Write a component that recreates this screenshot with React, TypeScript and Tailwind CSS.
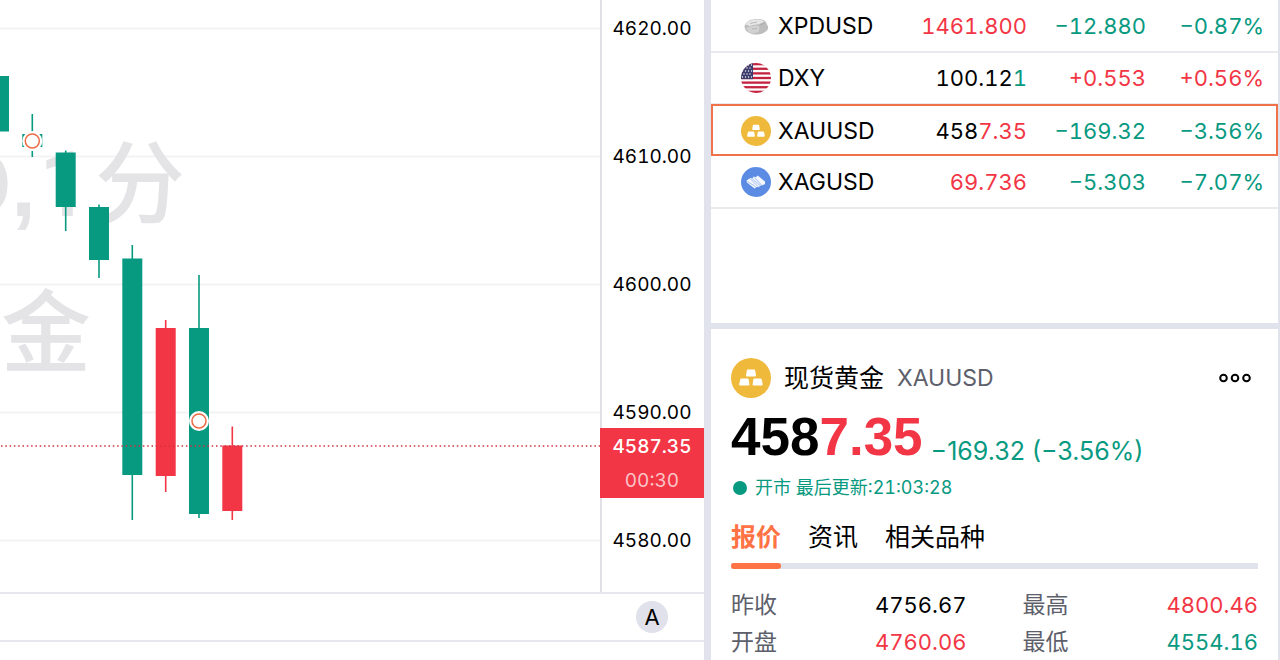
import React from "react";

const GREEN = "#089981";
const RED = "#f23645";

type Candle = { x: number; top: number; bottom: number; high: number; low: number; up: boolean };

const candles: Candle[] = [
  { x: -1, top: 76, bottom: 131.5, high: 76, low: 131.5, up: false },
  { x: 32.3, top: 134, bottom: 147, high: 114, low: 157, up: false },
  { x: 65.7, top: 152.5, bottom: 207, high: 150.5, low: 231, up: false },
  { x: 99, top: 207, bottom: 260, high: 204.5, low: 278, up: false },
  { x: 132.3, top: 258.5, bottom: 475, high: 245, low: 520, up: false },
  { x: 165.7, top: 328, bottom: 476, high: 320, low: 492, up: true },
  { x: 199, top: 328, bottom: 514, high: 275, low: 518, up: false },
  { x: 232.3, top: 445.5, bottom: 511, high: 426.5, low: 520, up: true },
];

const levels = ["4620.00", "4610.00", "4600.00", "4590.00", "4580.00"];

function Chart() {
  return (
    <svg className="absolute inset-0 h-full w-full" role="img" aria-label="XAUUSD 1分">
      {levels.map((level, i) => (
        <line key={level} x1="0" x2="100%" y1={28.5 + i * 128} y2={28.5 + i * 128} stroke="#f3f3f6" strokeWidth="2" />
      ))}
      <g fill="#e4e4e7" fontFamily='Roboto, "Noto Sans CJK SC", sans-serif' fontSize="90" fontWeight="500">
        <text x="12" y="216" textAnchor="end">D</text>
        <text x="11" y="216" fontFamily="Liberation Sans" fontWeight="700">,</text>
        <text x="39" y="216">1</text>
        <text x="95" y="216">分</text>
        <text x="1" y="365">金</text>
      </g>
      {candles.map((c) => (
        <g key={c.x} fill={c.up ? RED : GREEN}>
          <rect x={c.x - 0.8} y={c.high} width="1.6" height={c.low - c.high} />
          <rect x={c.x - 10} y={c.top} width="20" height={c.bottom - c.top} />
        </g>
      ))}
      <line x1="1" x2="100%" y1="446" y2="446" stroke="#d0303f" strokeWidth="1.5" strokeDasharray="1.5 2.8" />
      {[{ x: 32.3, y: 141 }, { x: 199, y: 421 }].map((m) => (
        <g key={m.x} fill="#fff">
          <circle cx={m.x} cy={m.y} r="10" />
          <circle cx={m.x} cy={m.y} r="7" stroke="#ee6a45" strokeWidth="1.5" />
        </g>
      ))}
    </svg>
  );
}

function GoldIcon({ className }: { className: string }) {
  return (
    <svg viewBox="0 0 40 40" className={className} aria-hidden="true">
      <circle cx="20" cy="20" r="20" fill="#efb93c" />
      <g fill="#fff">
        <path d="M17 11.500h6q1 0 1.200 1l.8 4.800q.1 1.200-1 1.200h-8q-1.200 0-1-1.200l.8-4.800q.2-1 1.200-1z" />
        <path d="M10.500 20.500h6q1 0 1.200 1l.7 4.800q.1 1.200-1 1.200H9.200q-1.200 0-1-1.200l1-4.800q.2-1 1.300-1z" />
        <path d="M23.500 20.500h6q1 0 1.200 1l1 4.800q.1 1.200-1 1.200h-8.100q-1.200 0-1-1.200l.7-4.800q.2-1 1.200-1z" />
      </g>
    </svg>
  );
}

function SilverIcon({ className }: { className: string }) {
  return (
    <svg viewBox="0 0 30 30" className={className} aria-hidden="true">
      <circle cx="15" cy="15" r="15" fill="#5b8be3" />
      <path d="M5.500 13.500L9.500 11l1.500.5 2-2 1.800.7 2-1.700L24 14.500v2.500l-3 1.500-1-.3-2.500 2-1.500-.4-2.500 1.700L6 15.500z" fill="#f4f7fe" />
      <path d="M9.500 12l7.500 7.500M13.500 10.500l7 7.500M6.500 14.500l8 5M11 11.500l8 7" stroke="#83a6ee" strokeWidth=".7" fill="none" />
    </svg>
  );
}

function PalladiumIcon({ className }: { className: string }) {
  return (
    <svg viewBox="0 0 30 30" className={className} aria-hidden="true">
      <path d="M3.500 15q.5-3 4-5 2-1.700 6-1.700 5-.8 9 .7 2.500 1 3 3.500l1.500 3q.5 2-1 4-3 3-7.500 3.800-6 1-10-1.300-5-2-5-7z" fill="#bdbdbd" />
      <path d="M4.500 13.500q1.500-3 5-4 6-1.500 11-.5l3 1.500-5 2.500-6 1-4 1z" fill="#e6e6e6" />
      <path d="M5 17l4-1.500 8-1 1.500 2-1 4.500-6 1.500-4-2z" fill="#d2d2d2" />
      <path d="M9 12.500l7-1.500M19 14l5-2M11 18l5-.5" stroke="#a6a6a6" strokeWidth=".7" fill="none" />
    </svg>
  );
}

function UsFlagIcon({ className }: { className: string }) {
  return (
    <svg viewBox="0 0 30 30" className={className} aria-hidden="true">
      <clipPath id="flag-clip">
        <circle cx="15" cy="15" r="15" />
      </clipPath>
      <g clipPath="url(#flag-clip)">
        <rect width="30" height="30" fill="#fff" />
        {[0, 2, 4, 6, 8, 10, 12].map((n) => (
          <rect key={n} y={(n * 30) / 13} width="30" height={30 / 13} fill="#c4233f" />
        ))}
        <rect width="12" height={(30 * 7) / 13} fill="#3c3b6e" />
        {[2, 5, 8, 11, 14].map((y, r) =>
          [1.5, 4.5, 7.5, 10.5].map((x) => (
            <circle key={`${x}-${y}`} cx={r % 2 ? x - 1.5 : x} cy={y} r=".7" fill="#fff" />
          )),
        )}
      </g>
    </svg>
  );
}

type Quote = {
  symbol: string;
  Icon: (props: { className: string }) => React.ReactElement;
  head: string;
  tail: string;
  tailClass: string;
  change: string;
  percent: string;
  changeClass: string;
  active?: boolean;
};

const quotes: Quote[] = [
  { symbol: "XPDUSD", Icon: PalladiumIcon, head: "", tail: "1461.800", tailClass: "text-[#f23645]", change: "−12.880", percent: "−0.87%", changeClass: "text-[#089981]" },
  { symbol: "DXY", Icon: UsFlagIcon, head: "100.12", tail: "1", tailClass: "text-[#089981]", change: "+0.553", percent: "+0.56%", changeClass: "text-[#f23645]" },
  { symbol: "XAUUSD", Icon: GoldIcon, head: "458", tail: "7.35", tailClass: "text-[#f23645]", change: "−169.32", percent: "−3.56%", changeClass: "text-[#089981]", active: true },
  { symbol: "XAGUSD", Icon: SilverIcon, head: "", tail: "69.736", tailClass: "text-[#f23645]", change: "−5.303", percent: "−7.07%", changeClass: "text-[#089981]" },
];

function Watchlist() {
  return (
    <table className="w-full table-fixed border-collapse text-[22px] leading-7 tabular-nums">
      <colgroup>
        <col />
        <col className="w-[120px]" />
        <col className="w-[119px]" />
        <col className="w-[132px]" />
      </colgroup>
      <tbody>
        {quotes.map(({ symbol, Icon, head, tail, tailClass, change, percent, changeClass, active }) => (
          <tr
            key={symbol}
            className={
              active
                ? "h-[52px] outline-2 -outline-offset-2 outline-[#f0724a]"
                : "h-[52px] border-b-2 border-[#e9eaee]"
            }
          >
            <th scope="row" className="pl-[30px] text-left text-[23px] font-normal">
              <span className="flex items-center gap-[7px]">
                <Icon className="size-[30px] shrink-0" />
                {symbol}
              </span>
            </th>
            <td className="text-right">
              {head}
              <span className={tailClass}>{tail}</span>
            </td>
            <td className={`text-right ${changeClass}`}>{change}</td>
            <td className={`pr-[14px] text-right ${changeClass}`}>{percent}</td>
          </tr>
        ))}
      </tbody>
    </table>
  );
}

const stats = [
  { label: "昨收", value: "4756.67", tone: "text-black" },
  { label: "最高", value: "4800.46", tone: "text-[#f23645]" },
  { label: "开盘", value: "4760.06", tone: "text-[#f23645]" },
  { label: "最低", value: "4554.16", tone: "text-[#089981]" },
];

function Detail() {
  return (
    <section className="px-5 pt-[29px]">
      <header className="flex items-center">
        <GoldIcon className="size-10" />
        <h2 className="ml-[13px] text-[25px] leading-10">现货黄金</h2>
        <span className="ml-[13px] text-[23px] leading-10 text-[#5d606b]">XAUUSD</span>
        <button type="button" aria-label="更多" className="mr-[7px] ml-auto">
          <svg width="32" height="10" viewBox="0 0 32 10" fill="none" stroke="#000" strokeWidth="2">
            <circle cx="4.5" cy="5" r="3.3" />
            <circle cx="16" cy="5" r="3.3" />
            <circle cx="27.5" cy="5" r="3.3" />
          </svg>
        </button>
      </header>
      <div className="mt-[7px] flex items-end gap-2">
        <strong className="font-['Liberation_Sans'] text-[53px] leading-[64px] font-bold">
          458<span className="text-[#f23645]">7.35</span>
        </strong>
        <span className="text-[25px] leading-9 text-[#089981]">−169.32 (−3.56%)</span>
      </div>
      <p className="mt-[5px] flex items-center text-[18px] leading-7 text-[#089981] tabular-nums">
        <span className="mr-2 ml-[2px] size-[14px] rounded-full bg-[#089981]" />
        开市 最后更新:21:03:28
      </p>
      <nav className="mt-[15px] flex gap-[27px] text-[25px] leading-10">
        <button type="button" className="font-bold text-[#ff7243]">报价</button>
        <button type="button">资讯</button>
        <button type="button">相关品种</button>
      </nav>
      <div className="mt-[6px] h-[6px] bg-[#e0e3eb]">
        <div className="h-full w-[50px] rounded-full bg-[#ff7243]" />
      </div>
      <dl className="mt-[18px] grid grid-cols-2 gap-x-14 leading-[37px] tabular-nums">
        {stats.map(({ label, value, tone }) => (
          <div key={label} className="flex justify-between">
            <dt className="text-[23px] text-[#5d606b]">{label}</dt>
            <dd className={`text-[22px] ${tone}`}>{value}</dd>
          </div>
        ))}
      </dl>
    </section>
  );
}

export default function App() {
  return (
    <main className="flex h-screen overflow-hidden bg-white font-['Inter','Noto_Sans_CJK_SC',sans-serif] text-black">
      <div className="flex min-w-0 flex-1 flex-col">
        <div className="flex min-h-0 flex-1 border-b-2 border-[#e6e7ee]">
          <div className="relative min-w-0 flex-1 overflow-hidden">
            <Chart />
          </div>
          <div className="relative w-[104px] border-l-2 border-[#e0e0e6] tabular-nums">
            <div className="h-full overflow-hidden">
              <ul className="-mt-[35px] pr-[2px] text-center text-[19px]">
                {levels.map((level) => (
                  <li key={level} className="flex h-32 items-center justify-center">{level}</li>
                ))}
              </ul>
            </div>
            <div className="absolute top-[428px] right-0 -left-[2px] bg-[#f23645] pt-[2px] text-center text-[19px] leading-[34px] text-white">
              <div className="font-medium">4587.35</div>
              <div className="text-[#fbc3c7]">00:30</div>
            </div>
          </div>
        </div>
        <div className="flex h-12 items-center justify-end border-b-2 border-[#e6e7ee] pr-9">
          <button type="button" className="size-8 rounded-full bg-[#e0e1ea] text-[22px]">A</button>
        </div>
        <div className="h-[18px]" />
      </div>
      <aside className="w-[45%] border-r-2 border-l-[7px] border-[#e0e3eb]">
        <div className="h-[323px]">
          <Watchlist />
        </div>
        <div className="h-[6px] bg-[#e0e3eb]" />
        <Detail />
      </aside>
    </main>
  );
}
